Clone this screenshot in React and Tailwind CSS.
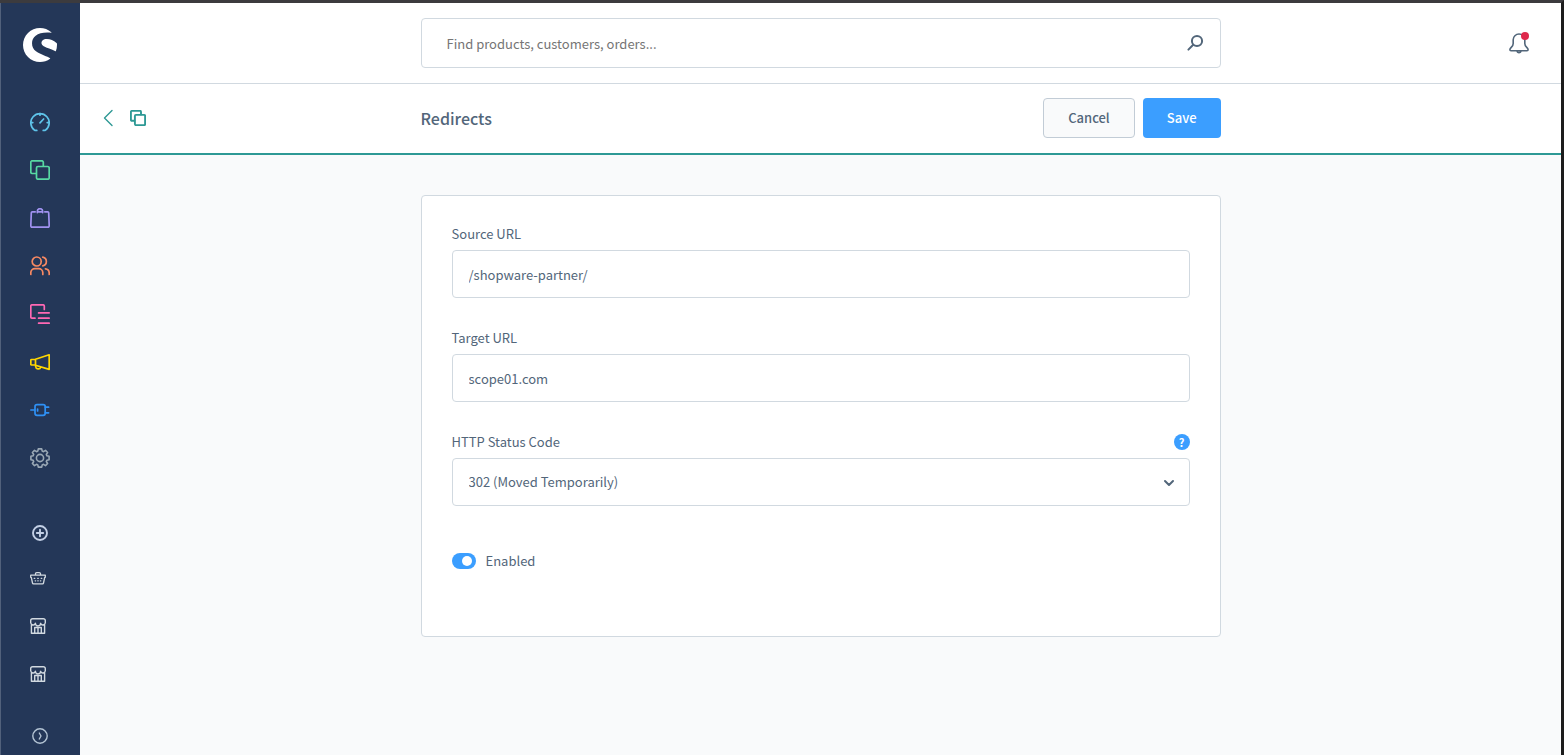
import { SiShopware } from "react-icons/si";

function Icon({ size = 20, width = 1.7, className = "", children }) {
  return (
    <svg
      width={size}
      height={size}
      viewBox={`0 0 ${size} ${size}`}
      fill="none"
      stroke="currentColor"
      strokeWidth={width}
      strokeLinecap="round"
      strokeLinejoin="round"
      className={className}
      aria-hidden="true"
    >
      {children}
    </svg>
  );
}

const GaugeIcon = () => (
  <Icon>
    <path d="M6.8 18.4H4.8A9.2 9.2 0 1 1 15.2 18.4H13.2M10 1.4V3.2M1 10.6H2.8M17.2 10.6H19M10 10.8L13.6 7" />
  </Icon>
);

const CatalogueIcon = () => (
  <Icon>
    <path d="M6 13.5H2.3A1.5 1.5 0 0 1 .8 12V2.3A1.5 1.5 0 0 1 2.3.8H11.8A1.5 1.5 0 0 1 13.3 2.3V6" />
    <rect x="6.5" y="6.5" width="12.7" height="12.7" rx="1.5" />
  </Icon>
);

const BagIcon = () => (
  <Icon>
    <path d="M5.2 3.8H2.3A1 1 0 0 0 1.3 4.8L.8 17.8A1.4 1.4 0 0 0 2.2 19.2H17.8A1.4 1.4 0 0 0 19.2 17.8L18.7 4.8A1 1 0 0 0 17.7 3.8H14.8M7.3 4.6V3.4A2.7 2.7 0 0 1 12.7 3.4V4.6M8.2 3.8H11.8" />
  </Icon>
);

const UsersIcon = () => (
  <Icon>
    <circle cx="6.7" cy="5.5" r="4.5" />
    <path d="M.8 18.5V16.5A4 4 0 0 1 4.8 12.7H8.8A4 4 0 0 1 12.8 16.5V18.5M12.8 1.1A4.5 4.5 0 0 1 12.8 9.9M15.4 12.8A4.3 4.3 0 0 1 19.2 17V18.5" />
  </Icon>
);

const ContentIcon = () => (
  <Icon>
    <path d="M5 14.2H2.1A1.3 1.3 0 0 1 .8 12.9V2.1A1.3 1.3 0 0 1 2.1.8H13A1.3 1.3 0 0 1 14.3 2.1V5.5M8.6 8.9H19.2M8.6 14.2H19.2M8.6 19.2H19.2" />
  </Icon>
);

const MegaphoneIcon = () => (
  <Icon>
    <path d="M5.5 7.2L19.2 2.8V17.4L5.5 13.2ZM5.5 7.5H1.6A.8.8 0 0 0 .8 8.3V12.2A.8.8 0 0 0 1.6 13H5.5M5.6 13.3V14.5A2.7 2.7 0 0 0 10.8 15.2" />
  </Icon>
);

const PlugIcon = () => (
  <Icon>
    <path d="M.8 10H4.8M15.3 7.2H18.6M15.3 12.8H18.6M7.6 9V11" />
    <rect x="5" y="4.7" width="10.2" height="10.6" rx="2" />
  </Icon>
);

const GearIcon = () => (
  <Icon width={1.6}>
    <circle cx="10" cy="10" r="3.6" />
    <path d="M8.3.9H11.7L12.2 3.1L13.5 3.7L15.5 2.4L17.6 4.5L16.3 6.5L16.9 7.8L19.1 8.3V11.7L16.9 12.2L16.3 13.5L17.6 15.5L15.5 17.6L13.5 16.3L12.2 16.9L11.7 19.1H8.3L7.8 16.9L6.5 16.3L4.5 17.6L2.4 15.5L3.7 13.5L3.1 12.2L.9 11.7V8.3L3.1 7.8L3.7 6.5L2.4 4.5L4.5 2.4L6.5 3.7L7.8 3.1Z" />
  </Icon>
);

const BasketIcon = () => (
  <Icon size={16} width={1.3}>
    <path d="M.7 5.2H15.3V7.3H14.7L13.5 13A1 1 0 0 1 12.5 13.8H3.5A1 1 0 0 1 2.5 13L1.3 7.3H.7ZM5.5 5V3.8A1.2 1.2 0 0 1 6.7 2.6H9.3A1.2 1.2 0 0 1 10.5 3.8V5" />
    <path d="M4.2 8.3H4.8M7.7 8.3H8.3M11.2 8.3H11.8M5.2 10.8H5.6M7.8 10.8H8.2M10.4 10.8H10.8" />
  </Icon>
);

const StoreIcon = () => (
  <Icon size={16} width={1.4}>
    <path d="M2.6.7H13.4A1.9 1.9 0 0 1 15.3 2.6V4.8A2.4 2.4 0 0 1 10.6 5.3A2.5 2.5 0 0 1 5.4 5.3A2.4 2.4 0 0 1 .7 4.8V2.6A1.9 1.9 0 0 1 2.6.7ZM1.4 7V15.3H14.6V7M4.7 15V9.5H11.3V15M8 9.5V15" />
  </Icon>
);

const mainItems = [
  { label: "Dashboard", icon: GaugeIcon, color: "text-[#5fc4ea]" },
  { label: "Catalogues", icon: CatalogueIcon, color: "text-[#57d9a3]" },
  { label: "Orders", icon: BagIcon, color: "text-[#a092f0]" },
  { label: "Customers", icon: UsersIcon, color: "text-[#f88962]" },
  { label: "Content", icon: ContentIcon, color: "text-[#ff68b4]" },
  { label: "Marketing", icon: MegaphoneIcon, color: "text-[#ffd700]" },
  { label: "Extensions", icon: PlugIcon, color: "text-[#2f91f5]" },
  { label: "Settings", icon: GearIcon, color: "text-[#9aa8b5]" },
];

const channelItems = [
  { label: "Headless", icon: BasketIcon },
  { label: "Storefront", icon: StoreIcon },
  { label: "Second storefront", icon: StoreIcon },
];

function Sidebar() {
  return (
    <aside className="flex w-20 shrink-0 flex-col border-l border-[#52617b] bg-[#243758] text-[#d1d9e0]">
      <a href="#home" aria-label="Home" className="flex h-[95px] pl-[22px] pt-[25px] text-white">
        <SiShopware size={34} />
      </a>
      <nav aria-label="Main">
        {mainItems.map(({ label, icon: Glyph, color }) => (
          <a key={label} href="#nav" aria-label={label} className={`flex h-12 items-center pl-[29px] ${color}`}>
            <Glyph />
          </a>
        ))}
      </nav>
      <button type="button" aria-label="Add sales channel" className="mt-[30px] flex h-[42px] items-center pl-[31px] text-[#c3d0e6]">
        <Icon size={16} width={1.9}>
          <circle cx="8" cy="8" r="7" />
          <path d="M8 4.8V11.2M4.8 8H11.2" />
        </Icon>
      </button>
      <nav aria-label="Sales channels">
        {channelItems.map(({ label, icon: Glyph }) => (
          <a key={label} href="#channel" aria-label={label} className="flex h-12 items-center pl-[29px]">
            <Glyph />
          </a>
        ))}
      </nav>
      <button type="button" aria-label="Expand menu" className="mt-auto flex h-[38px] items-center pl-[31px] text-[#b4c4d4]">
        <Icon size={16} width={1.4}>
          <circle cx="8" cy="8" r="7.2" />
          <path d="M7.3 5L9 8L7.3 11" />
        </Icon>
      </button>
    </aside>
  );
}

const columns = "grid grid-cols-[minmax(68px,1fr)_minmax(0,800px)_minmax(68px,1fr)]";
const control =
  "h-12 w-full rounded-[4px] border border-[#d1d9e0] bg-white px-4 text-[13px] text-[#52667a] outline-none";

function Header() {
  return (
    <header className={`${columns} h-[81px] items-center border-b border-[#d1d9e0] bg-white`}>
      <div className="col-start-2 flex h-[50px] items-center rounded-[4px] border border-[#d1d9e0] pr-4">
        <input
          type="search"
          aria-label="Search"
          placeholder="Find products, customers, orders..."
          className="h-full min-w-0 flex-1 bg-transparent pl-[25px] text-[13px] outline-none placeholder:text-[#757575]"
        />
        <button type="button" aria-label="Start search" className="text-[#52667a]">
          <Icon size={18} width={2}>
            <circle cx="11" cy="7" r="5.1" />
            <path d="M7.2 10.8L2.4 15.6" />
          </Icon>
        </button>
      </div>
      <button type="button" aria-label="Notifications" className="mr-[31px] justify-self-end text-[#52667a]">
        <svg width="22" height="24" viewBox="0 0 22 24" fill="none" aria-hidden="true">
          <path
            d="M5.2 12.5V8.8A5.8 5.8 0 0 1 16.8 8.8V12.5C16.8 16 20.1 16.6 20.1 18.8Q20.1 19.8 19 19.8H3Q1.9 19.8 1.9 18.8C1.9 16.6 5.2 16 5.2 12.5ZM9 20.4A2.2 2.2 0 0 0 13 20.4"
            stroke="currentColor"
            strokeWidth="1.6"
            strokeLinejoin="round"
          />
          <circle cx="17" cy="4.9" r="4" fill="#de294c" />
        </svg>
      </button>
    </header>
  );
}

function ActionBar() {
  return (
    <div className={`${columns} items-center border-b-2 border-[#2e9995] bg-white pb-[15px] pt-[14px]`}>
      <div className="flex items-center gap-3 pl-5 text-[#2e9995]">
        <a href="#back" aria-label="Back">
          <Icon size={18} width={1.4}>
            <path d="M12 1.5L4.5 9L12 16.5" />
          </Icon>
        </a>
        <Icon size={16} width={1.9}>
          <path d="M4.5 10.8H1.9A1 1 0 0 1 .9 9.8V1.9A1 1 0 0 1 1.9.9H10A1 1 0 0 1 11 1.9V4.5" />
          <rect x="4.9" y="4.9" width="10.2" height="10.2" rx="1" />
        </Icon>
      </div>
      <div className="flex items-center justify-between">
        <h1 className="text-[16px] font-medium">Redirects</h1>
        <div className="flex gap-2 text-[13px] font-medium">
          <button type="button" className="h-10 rounded-[4px] border border-[#c2ccd6] bg-[#f9fafb] px-6">
            Cancel
          </button>
          <button type="button" className="h-10 rounded-[4px] bg-[#3b9eff] px-6 text-white">
            Save
          </button>
        </div>
      </div>
    </div>
  );
}

function TextField({ id, label, value }) {
  return (
    <div className="mb-8">
      <label htmlFor={id} className="mb-2 block text-[13px] leading-4">
        {label}
      </label>
      <input id={id} type="text" defaultValue={value} className={control} />
    </div>
  );
}

function RedirectForm() {
  return (
    <form className="mx-auto max-w-[800px] rounded-[4px] border border-[#d1d9e0] bg-white px-[30px] pb-[52px] pt-[30px]">
      <TextField id="source" label="Source URL" value="/shopware-partner/" />
      <TextField id="target" label="Target URL" value="scope01.com" />
      <div className="mb-8">
        <div className="mb-2 flex h-4 items-center justify-between">
          <label htmlFor="status" className="text-[13px] leading-4">
            HTTP Status Code
          </label>
          <button
            type="button"
            aria-label="Help"
            className="size-4 rounded-full bg-[#3b9eff] text-center text-[11px] font-bold leading-4 text-white"
          >
            ?
          </button>
        </div>
        <div className="relative">
          <select id="status" defaultValue="302" className={`${control} appearance-none`}>
            <option value="301">301 (Moved Permanently)</option>
            <option value="302">302 (Moved Temporarily)</option>
          </select>
          <Icon size={12} width={2} className="pointer-events-none absolute right-[15px] top-[19px]">
            <path d="M2 4L6 8L10 4" />
          </Icon>
        </div>
      </div>
      <div className="flex h-[46px] items-center gap-[10px]">
        <input
          id="enabled"
          type="checkbox"
          role="switch"
          defaultChecked
          className="h-4 w-6 appearance-none rounded-full bg-[#c2ccd6] px-1 py-[3px] before:block before:size-[10px] before:rounded-full before:bg-white checked:bg-[#3b9eff] checked:before:ml-auto"
        />
        <label htmlFor="enabled" className="text-[13px] leading-4">
          Enabled
        </label>
      </div>
    </form>
  );
}

export default function App() {
  return (
    <div className="flex min-h-screen border-r-[3px] border-t-[3px] border-r-[#1c1c1c] border-t-[#3c3b3e] bg-[#f9fafb] font-['Noto_Sans_CJK_SC',sans-serif] text-[#52667a]">
      <Sidebar />
      <div className="min-w-0 flex-1">
        <Header />
        <ActionBar />
        <main className="py-10">
          <RedirectForm />
        </main>
      </div>
    </div>
  );
}
